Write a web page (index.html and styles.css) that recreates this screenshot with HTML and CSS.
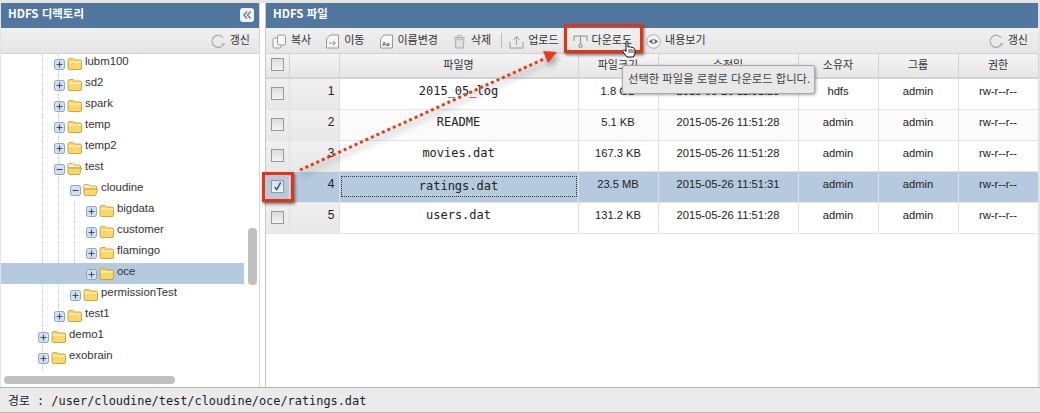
FILE: index.html
```html
<!DOCTYPE html>
<html lang="ko">
<head>
  <meta charset="UTF-8" />
  <title>HDFS 브라우저</title>
  <link rel="stylesheet" href="styles.css">
</head>
<body>
  <svg class="defs" width="0" height="0">
    <symbol id="folder" viewBox="0 0 15 13">
      <path d="M1 3.5 Q1 1.5 2.5 1.5 H6 L7.5 3 H13 Q14.5 3 14.5 4.5 V11 Q14.5 12.5 13 12.5 H2.5 Q1 12.5 1 11 Z" fill="#fcd765" stroke="#b8963c" stroke-width=".8"/>
      <path d="M1.6 5 H13.9" stroke="#fff3c0" stroke-width="1.2"/>
    </symbol>
    <symbol id="folder-open" viewBox="0 0 15 13">
      <path d="M.8 3 Q.8 1.5 2 1.5 H5.5 L7 3 H12.5 Q13.5 3 13.5 4 V6 H.8 Z" fill="#fff1b8" stroke="#b8963c" stroke-width=".8"/>
      <path d="M2.5 6 H14.6 L13 11.5 Q12.7 12.5 11.8 12.5 H2.5 Q1.2 12.5 1 11 L.8 7 Z" fill="#fcd765" stroke="#b8963c" stroke-width=".8"/>
    </symbol>
    <symbol id="plus" viewBox="0 0 11 11">
      <rect x=".5" y=".5" width="10" height="10" rx="2" fill="#d4e0ee" stroke="#8ba3bf"/>
      <path d="M2.5 5.5 H8.5 M5.5 2.5 V8.5" stroke="#34537a" stroke-width="1.1"/>
    </symbol>
    <symbol id="minus" viewBox="0 0 11 11">
      <rect x=".5" y=".5" width="10" height="10" rx="2" fill="#d4e0ee" stroke="#8ba3bf"/>
      <path d="M2.5 5.5 H8.5" stroke="#34537a" stroke-width="1.1"/>
    </symbol>
    <symbol id="refresh" viewBox="0 0 16 16">
      <path d="M13.6 10.5 A6.5 6.5 0 1 1 13 4" fill="none" stroke="#a8a8a8" stroke-width="1.2"/>
      <path d="M11.5 10 H15.5 L13.5 12.6 Z" fill="#a8a8a8"/>
    </symbol>
  </svg>

  <div class="app">
    <div class="main">
      <section class="panel panel-tree">
        <header class="panel-title">
          <span>HDFS 디렉토리</span>
          <button class="collapse-btn">
            <svg viewBox="0 0 14 14"><path d="M7 3.5 L3.8 7 L7 10.5 M10.6 3.5 L7.4 7 L10.6 10.5" fill="none" stroke="#6d7f94" stroke-width="1.4"/></svg>
          </button>
        </header>
        <div class="toolbar toolbar-end">
          <span class="tool"><svg class="icon"><use href="#refresh"/></svg>갱신</span>
        </div>
        <div class="tree-body">
          <div class="tree-view">
            <ul class="tree">
              <li class="node lv3"><svg class="exp"><use href="#plus"/></svg><svg class="fld"><use href="#folder"/></svg><span>lubm100</span></li>
              <li class="node lv3"><svg class="exp"><use href="#plus"/></svg><svg class="fld"><use href="#folder"/></svg><span>sd2</span></li>
              <li class="node lv3"><svg class="exp"><use href="#plus"/></svg><svg class="fld"><use href="#folder"/></svg><span>spark</span></li>
              <li class="node lv3"><svg class="exp"><use href="#plus"/></svg><svg class="fld"><use href="#folder"/></svg><span>temp</span></li>
              <li class="node lv3"><svg class="exp"><use href="#plus"/></svg><svg class="fld"><use href="#folder"/></svg><span>temp2</span></li>
              <li class="node lv3"><svg class="exp"><use href="#minus"/></svg><svg class="fld"><use href="#folder-open"/></svg><span>test</span></li>
              <li class="node lv4"><svg class="exp"><use href="#minus"/></svg><svg class="fld"><use href="#folder-open"/></svg><span>cloudine</span></li>
              <li class="node lv5"><svg class="exp"><use href="#plus"/></svg><svg class="fld"><use href="#folder"/></svg><span>bigdata</span></li>
              <li class="node lv5"><svg class="exp"><use href="#plus"/></svg><svg class="fld"><use href="#folder"/></svg><span>customer</span></li>
              <li class="node lv5"><svg class="exp"><use href="#plus"/></svg><svg class="fld"><use href="#folder"/></svg><span>flamingo</span></li>
              <li class="node lv5 selected"><svg class="exp"><use href="#plus"/></svg><svg class="fld"><use href="#folder"/></svg><span>oce</span></li>
              <li class="node lv4"><svg class="exp"><use href="#plus"/></svg><svg class="fld"><use href="#folder"/></svg><span>permissionTest</span></li>
              <li class="node lv3"><svg class="exp"><use href="#plus"/></svg><svg class="fld"><use href="#folder"/></svg><span>test1</span></li>
              <li class="node lv2"><svg class="exp"><use href="#plus"/></svg><svg class="fld"><use href="#folder"/></svg><span>demo1</span></li>
              <li class="node lv2"><svg class="exp"><use href="#plus"/></svg><svg class="fld"><use href="#folder"/></svg><span>exobrain</span></li>
              <li class="node lv2"><svg class="exp"><use href="#plus"/></svg><svg class="fld"><use href="#folder"/></svg></li>
            </ul>
          </div>
          <div class="vscroll"><div class="vscroll-thumb"></div></div>
        </div>
        <div class="hscroll"><div class="hscroll-thumb"></div></div>
      </section>

      <div class="splitter"></div>

      <section class="panel panel-files">
        <header class="panel-title"><span>HDFS 파일</span></header>
        <div class="toolbar">
          <span class="tool">
            <svg class="icon" viewBox="0 0 15 15"><rect x="1" y="4" width="8" height="10" rx="1.5" fill="#f6f6f6" stroke="#9a9a9a"/><rect x="5.5" y="1" width="8" height="10" rx="1.5" fill="#f6f6f6" stroke="#9a9a9a"/></svg>복사
          </span>
          <span class="tool">
            <svg class="icon" viewBox="0 0 15 15"><path d="M1.5 5 L5 1 H13.5 V14 H1.5 Z" fill="#f6f6f6" stroke="#9a9a9a"/><path d="M4 9 H10 M8 7 L10.5 9 L8 11" fill="none" stroke="#9a9a9a"/></svg>이동
          </span>
          <span class="tool">
            <svg class="icon" viewBox="0 0 15 15"><path d="M1.5 5 L5 1 H13.5 V14 H1.5 Z" fill="#f6f6f6" stroke="#9a9a9a"/><text x="3" y="12" class="icon-text">Aa</text></svg>이름변경
          </span>
          <span class="tool">
            <svg class="icon" viewBox="0 0 15 15"><path d="M2 3.5 H13 M5.5 3 V1.5 H9.5 V3" fill="none" stroke="#b0b0b0"/><path d="M3 5 H12 L11.3 14 H3.7 Z" fill="#d6d6d6" stroke="#b0b0b0"/><path d="M6 6.5 V12.5 M9 6.5 V12.5" stroke="#f4f4f4"/></svg>삭제
          </span>
          <span class="tool-sep"></span>
          <span class="tool">
            <svg class="icon" viewBox="0 0 15 15"><path d="M1 8 V14 H14 V8" fill="none" stroke="#a0a0a0"/><path d="M7.5 11 V3 M4.5 6 L7.5 2.5 L10.5 6" fill="none" stroke="#a0a0a0"/></svg>업로드
          </span>
          <span class="tool">
            <svg class="icon" viewBox="0 0 15 15"><path d="M1 7 V2 H14 V7" fill="none" stroke="#8a8a8a"/><path d="M7.5 2 V10" stroke="#8a8a8a"/><circle cx="7.5" cy="12" r="1.7" fill="none" stroke="#8a8a8a"/></svg>다운로드
          </span>
          <span class="tool">
            <svg class="icon" viewBox="0 0 15 15"><circle cx="7.5" cy="7.5" r="6.8" fill="#f4f4f4" stroke="#b0b0b0"/><path d="M2.8 7.5 Q7.5 3 12.2 7.5 Q7.5 12 2.8 7.5 Z" fill="#666"/><circle cx="7.5" cy="7.5" r="1.4" fill="#f4f4f4"/></svg>내용보기
          </span>
          <span class="tool tool-right"><svg class="icon"><use href="#refresh"/></svg>갱신</span>
        </div>

        <table class="grid">
          <colgroup>
            <col class="c-check"><col class="c-num"><col class="c-name"><col class="c-size"><col class="c-date"><col class="c-user"><col class="c-user"><col class="c-user">
          </colgroup>
          <thead>
            <tr>
              <th class="side"><span class="check"></span></th>
              <th class="side"></th>
              <th>파일명</th>
              <th>파일크기</th>
              <th>수정일</th>
              <th>소유자</th>
              <th>그룹</th>
              <th>권한</th>
            </tr>
          </thead>
          <tbody>
            <tr>
              <td class="side"><span class="check"></span></td>
              <td class="side num">1</td>
              <td class="mono">2015_05_log</td>
              <td>1.8 GB</td>
              <td>2015-05-26 11:51:28</td>
              <td>hdfs</td>
              <td>admin</td>
              <td>rw-r--r--</td>
            </tr>
            <tr class="alt">
              <td class="side"><span class="check"></span></td>
              <td class="side num">2</td>
              <td class="mono">README</td>
              <td>5.1 KB</td>
              <td>2015-05-26 11:51:28</td>
              <td>admin</td>
              <td>admin</td>
              <td>rw-r--r--</td>
            </tr>
            <tr>
              <td class="side"><span class="check"></span></td>
              <td class="side num">3</td>
              <td class="mono">movies.dat</td>
              <td>167.3 KB</td>
              <td>2015-05-26 11:51:28</td>
              <td>admin</td>
              <td>admin</td>
              <td>rw-r--r--</td>
            </tr>
            <tr class="row-selected">
              <td class="side">
                <span class="check">
                  <svg viewBox="0 0 12 12"><path d="M3 6.5 L5.2 9.5 L9.5 1.5" fill="none" stroke="#2f4fb0" stroke-width="1.6"/></svg>
                </span>
              </td>
              <td class="side num">4</td>
              <td class="mono focus-cell"><div class="focus-box">ratings.dat</div></td>
              <td>23.5 MB</td>
              <td>2015-05-26 11:51:31</td>
              <td>admin</td>
              <td>admin</td>
              <td>rw-r--r--</td>
            </tr>
            <tr>
              <td class="side"><span class="check"></span></td>
              <td class="side num">5</td>
              <td class="mono">users.dat</td>
              <td>131.2 KB</td>
              <td>2015-05-26 11:51:28</td>
              <td>admin</td>
              <td>admin</td>
              <td>rw-r--r--</td>
            </tr>
          </tbody>
        </table>
      </section>
    </div>

    <footer class="status">경로 : /user/cloudine/test/cloudine/oce/ratings.dat</footer>
  </div>

  <!-- annotations drawn on top of the screenshot -->
  <svg class="arrow" width="1040" height="413" viewBox="0 0 1040 413">
    <line x1="300" y1="170" x2="546" y2="58" stroke="#ea3a1a" stroke-width="3" stroke-dasharray="3 3"/>
    <path d="M543 51 L557 52 L548 63 Z" fill="#ea3a1a"/>
  </svg>
  <div class="mark mark-download"></div>
  <div class="mark mark-check"></div>
  <div class="tooltip">선택한 파일을 로컬로 다운로드 합니다.</div>
  <svg class="hand" width="16" height="18" viewBox="0 0 16 18">
    <path d="M5 10 V2.5 Q5 1 6 1 Q7 1 7 2.5 V7 L8 6.8 L9.5 7 L11 7.4 L12.8 8 Q14 8.5 14 10 V13 L12.5 17 H6 L2 12 Q1 10.5 2.4 10 Q3.6 9.8 5 11.5 Z" fill="#fff" stroke="#111" stroke-width="1"/>
    <path d="M8 9 V13 M10 9 V13 M12 9.5 V13" stroke="#111" stroke-width=".8"/>
  </svg>
</body>
</html>
```

FILE: styles.css
```css
* {
  box-sizing: border-box;
}

body {
  margin: 0;
  width: 1040px;
  height: 413px;
  overflow: hidden;
  background-color: #e4e4e4;
  color: #222;
  font-family: "Liberation Sans", "Noto Sans CJK KR", sans-serif;
  font-size: 12px;
}

.defs {
  position: absolute;
}

.app {
  display: flex;
  flex-direction: column;
  height: 413px;
  padding-top: 3px;
}

.main {
  display: flex;
  height: 384px;
  padding: 0 2px 0 1px;
}

.panel {
  display: flex;
  flex-direction: column;
  background-color: #fff;
}

.panel-tree {
  width: 258px;
}

.panel-files {
  width: 772px;
}

.splitter {
  width: 7px;
  background-color: #fff;
  border-left: 1px solid #d8d8d8;
  border-right: 1px solid #c8c8c8;
}

.panel-title {
  display: flex;
  align-items: center;
  justify-content: space-between;
  height: 25px;
  padding: 0 5px 2px 7px;
  background-color: #52779f;
  color: #fff;
  font-family: "Noto Sans CJK KR", sans-serif;
  font-size: 11.5px;
  font-weight: 700;
}

.panel-title span {
  margin-bottom: 4px;
}

.collapse-btn {
  width: 14px;
  height: 14px;
  padding: 0;
  border: 0;
  border-radius: 3px;
  background-color: #f2f2f2;
}

.collapse-btn svg {
  display: block;
}

/* toolbars */
.toolbar {
  display: flex;
  align-items: center;
  gap: 14px;
  height: 26px;
  padding: 0 10px 0 6px;
  background: linear-gradient(#f1f1f1, #e5e5e5);
  border-bottom: 1px solid #d2d2d2;
  font-family: "Noto Sans CJK KR", sans-serif;
  font-size: 11px;
  color: #333;
}

.toolbar-end {
  justify-content: flex-end;
  padding-right: 9px;
}

.tool {
  display: flex;
  align-items: center;
  gap: 4px;
  line-height: 20px;
  padding-bottom: 4px;
}

.tool-right {
  margin-left: auto;
}

.tool-sep {
  width: 1px;
  height: 15px;
  margin: 0 -7px 0 -4px;
  background-color: #bcbcbc;
}

.icon {
  width: 15px;
  height: 15px;
  flex: none;
  margin-top: 5px;
}

.icon-text {
  font-family: "Liberation Sans", sans-serif;
  font-size: 6px;
  font-weight: 700;
  fill: #555;
}

/* directory tree */
.tree-body {
  display: flex;
  height: 318px;
}

.tree-view {
  width: 243px;
  overflow: hidden;
}

.tree {
  margin: -1px 0 0;
  padding: 0;
  list-style: none;
  font-size: 11.4px;
}

.node {
  --guide: linear-gradient(#c8c8c8 50%, transparent 50%);
  display: flex;
  align-items: center;
  height: 21px;
  color: #333;
  background-image: var(--guide), var(--guide);
  background-size: 1px 2px;
  background-repeat: repeat-y;
  background-position: 41px 0, 57px 0;
}

.node.lv2 {
  padding-left: 37px;
  background-image: var(--guide);
  background-position: 41px 0;
}

.node.lv3 {
  padding-left: 53px;
}

.node.lv4 {
  padding-left: 69px;
}

.node.lv5 {
  padding-left: 85px;
  background-image: var(--guide), var(--guide), var(--guide);
  background-position: 41px 0, 57px 0, 73px 0;
}

.node.selected {
  background-color: #b5c9df;
}

.exp {
  width: 11px;
  height: 11px;
  flex: none;
  margin-top: 2px;
}

.fld {
  width: 15px;
  height: 13px;
  flex: none;
  margin-left: 2px;
}

.node span {
  margin: 0 0 5px 3px;
}

.vscroll {
  width: 15px;
  padding: 174px 0 0 4px;
  background-color: #fff;
}

.vscroll-thumb {
  width: 9px;
  height: 57px;
  border-radius: 4px;
  background-color: #c0c0c0;
}

.hscroll {
  height: 15px;
  padding: 4px 0 0 3px;
  background-color: #fff;
}

.hscroll-thumb {
  width: 171px;
  height: 8px;
  border-radius: 4px;
  background-color: #c0c0c0;
}

/* file grid */
.grid {
  width: 772px;
  border-collapse: collapse;
  table-layout: fixed;
  font-size: 11.2px;
}

.c-check { width: 23px; }
.c-num { width: 50px; }
.c-name { width: 239px; }
.c-size { width: 80px; }
.c-date { width: 140px; }
.c-user { width: 80px; }

.grid th {
  height: 24px;
  padding: 0 0 3px;
  background: linear-gradient(#f4f4f4, #e6e6e6);
  border-right: 1px solid #d4d4d4;
  border-bottom: 2px solid #d4d4d4;
  font-family: "Noto Sans CJK KR", sans-serif;
  font-size: 11px;
  font-weight: 400;
  color: #333;
}

.grid td {
  height: 31px;
  padding: 0 0 5px;
  border-right: 1px solid #e0e0e0;
  border-bottom: 1px solid #e4e4e4;
  text-align: center;
  color: #222;
}

.grid .alt td {
  background-color: #fbfbfb;
}

.grid td.side {
  padding-bottom: 0;
  background: linear-gradient(#f0f0f0, #e8e8e8);
}

.grid td.num {
  padding: 0 4px 5px 0;
  text-align: right;
  font-size: 12px;
}

.grid td.mono {
  font-family: "DejaVu Sans Mono", "Liberation Mono", monospace;
  font-size: 12px;
}

.row-selected td,
.grid .row-selected td.side {
  background: #b5c9df;
}

.grid td.focus-cell {
  padding: 0 1px;
}

.focus-box {
  height: 21px;
  margin-top: -1px;
  border: 1px dotted #333;
  line-height: 18px;
}

.check {
  display: block;
  width: 13px;
  height: 13px;
  margin: 0 auto 0 5px;
  border: 1px solid #999;
  background: linear-gradient(#dcdcdc, #f4f4f4);
}

.check svg {
  display: block;
  width: 11px;
  height: 11px;
}

.status {
  height: 26px;
  padding: 3px 0 0 8px;
  background-color: #ebebeb;
  border-top: 1px solid #b4b4b4;
  border-bottom: 1px solid #c4b8b8;
  font-family: "DejaVu Sans Mono", "Noto Sans CJK KR", monospace;
  font-size: 11.9px;
  line-height: 20px;
  color: #222;
}

/* overlays */
.arrow {
  position: absolute;
  top: 0;
  left: 0;
  filter: drop-shadow(2px 4px 3px rgba(0, 0, 0, .4));
}

.mark {
  position: absolute;
  border: 3px solid #e63312;
  box-shadow: 1px 2px 3px rgba(0, 0, 0, .55);
}

.mark-download {
  top: 24px;
  left: 564px;
  width: 79px;
  height: 29px;
}

.mark-check {
  top: 172px;
  left: 262px;
  width: 32px;
  height: 30px;
}

.tooltip {
  position: absolute;
  top: 65px;
  left: 622px;
  width: 193px;
  height: 29px;
  padding-left: 5px;
  border: 1px solid #a8a8a8;
  border-radius: 3px;
  background-color: #e8e8e8;
  box-shadow: 1px 1px 3px rgba(0, 0, 0, .35);
  font-family: "Noto Sans CJK KR", sans-serif;
  font-size: 11.3px;
  line-height: 25px;
  color: #444;
}

.hand {
  position: absolute;
  top: 40px;
  left: 621px;
}
```
